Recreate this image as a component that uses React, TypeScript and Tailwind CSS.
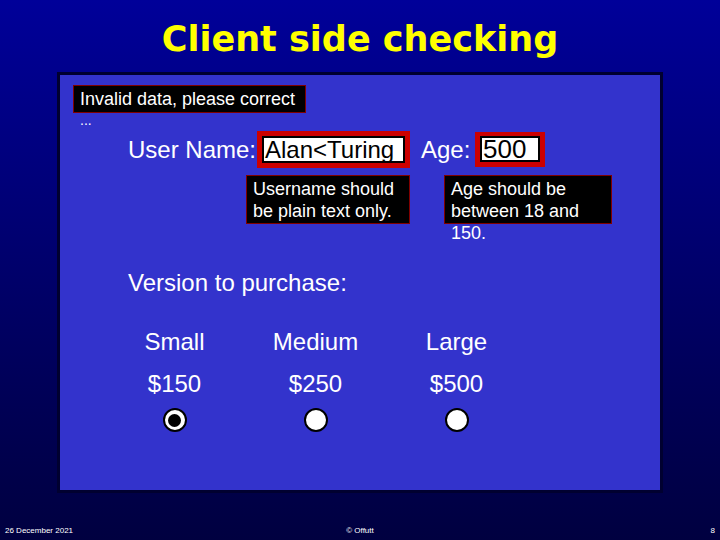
const sans = "font-['Liberation_Sans',Arial,sans-serif]";

function Radio({ checked }: { checked?: boolean }) {
  return (
    <div className="mx-auto flex h-[24px] w-[24px] items-center justify-center rounded-full border-2 border-black bg-white">
      {checked && <div className="h-[13px] w-[13px] rounded-full bg-black" />}
    </div>
  );
}

const versions = [
  { name: "Small", price: "$150", checked: true },
  { name: "Medium", price: "$250" },
  { name: "Large", price: "$500" },
];

export default function App() {
  return (
    <div className={`flex h-[540px] w-[720px] flex-col bg-gradient-to-b from-[#000099] to-[#000040] ${sans}`}>
      {/* Title */}
      <div className="h-[72px] pt-[19px] text-center">
        <h1 className="font-['DejaVu_Sans',Verdana,sans-serif] text-[35px] font-bold leading-[40px] text-[#ffff00]">
          Client side checking
        </h1>
      </div>

      {/* Form panel */}
      <div className="mx-[57px] h-[421px] border-[3px] border-[#000030] bg-[#3333cc] text-white">
        <div className="ml-[13px] mt-[10px] flex h-[28px] w-[233px] items-center border border-[#800000] bg-black pl-[6px] text-[18px] leading-[22px]">
          Invalid data, please correct
        </div>
        <div className="ml-[20px] h-[18px] text-[14px] leading-[14px]">...</div>

        <div className="flex h-[37px] items-center text-[24px]">
          <span className="ml-[68px] w-[129px] leading-[28px]">User Name:</span>
          <div className="bg-[#cc0000] p-[5px]">
            <div className="h-[27px] w-[143px] border-2 border-black bg-white pl-[1px] text-[24px] leading-[24px] text-black">
              Alan&lt;Turing
            </div>
          </div>
          <span className="ml-[11px] w-[54px] leading-[28px]">Age:</span>
          <div className="bg-[#cc0000] p-[5px] pt-[4px]">
            <div className="flex h-[26px] w-[60px] items-center border-2 border-black bg-white pl-[1px] text-[26px] leading-[26px] text-black">
              500
            </div>
          </div>
        </div>

        <div className="mt-[7px] flex text-[18px] leading-[22px]">
          <div className="ml-[186px] h-[49px] w-[164px] border border-[#800000] bg-black pl-[6px] pt-[2px]">
            Username should be plain text only.
          </div>
          <div className="ml-[34px] h-[49px] w-[168px] border border-[#800000] bg-black pl-[6px] pt-[2px]">
            <div className="w-[140px]">Age should be between 18 and 150.</div>
          </div>
        </div>

        <div className="ml-[68px] mt-[46px] text-[24px] leading-[26px]">Version to purchase:</div>

        <div className="ml-[44px] mt-[33px] grid grid-cols-[141px_141px_141px] text-center text-[24px] leading-[26px]">
          {versions.map((v) => (
            <div key={v.name}>
              <div>{v.name}</div>
              <div className="mt-[16px]">{v.price}</div>
              <div className="mt-[11px]">
                <Radio checked={v.checked} />
              </div>
            </div>
          ))}
        </div>
      </div>

      {/* Footer */}
      <div className="mt-auto flex h-[18px] items-center justify-between px-[5px] pb-[1px] text-[8px] text-white">
        <span className="w-[100px]">26 December 2021</span>
        <span>© Offutt</span>
        <span className="w-[100px] text-right">8</span>
      </div>
    </div>
  );
}
